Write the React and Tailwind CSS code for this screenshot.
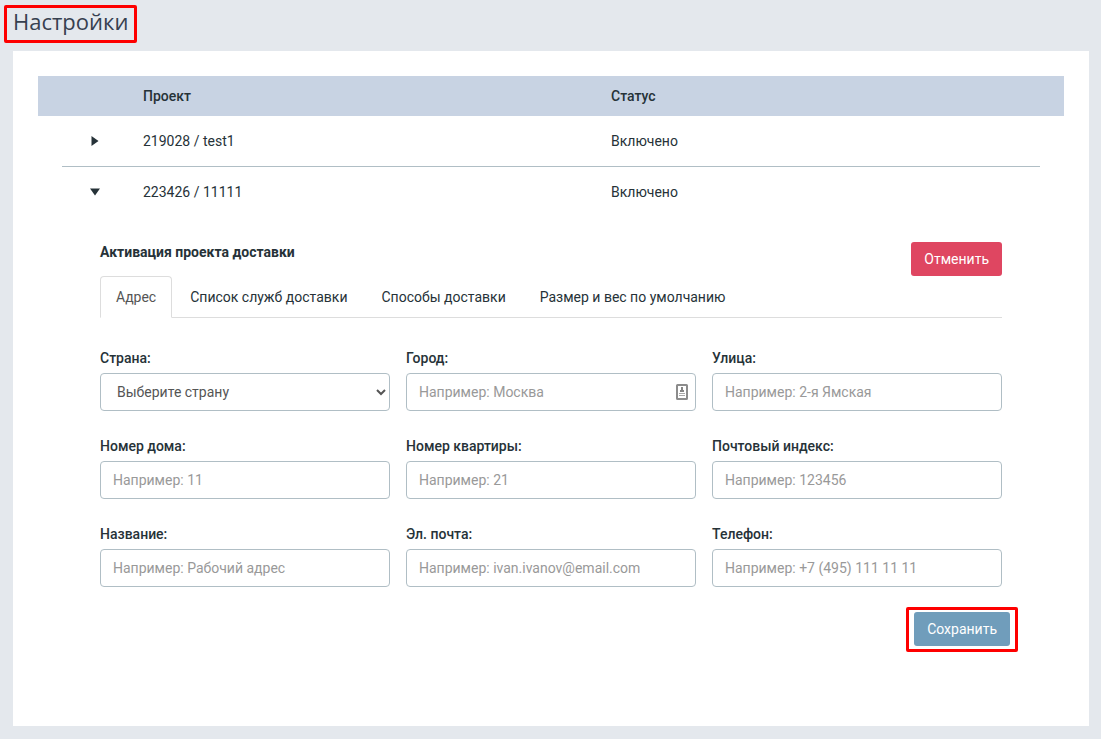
const tabs = ["Адрес", "Список служб доставки", "Способы доставки", "Размер и вес по умолчанию"];

const fields = [
  { id: "country", label: "Страна:", options: ["Выберите страну"] },
  { id: "city", label: "Город:", hint: "Например: Москва", autofill: true },
  { id: "street", label: "Улица:", hint: "Например: 2-я Ямская" },
  { id: "house", label: "Номер дома:", hint: "Например: 11" },
  { id: "flat", label: "Номер квартиры:", hint: "Например: 21" },
  { id: "zip", label: "Почтовый индекс:", hint: "Например: 123456" },
  { id: "name", label: "Название:", hint: "Например: Рабочий адрес" },
  { id: "email", label: "Эл. почта:", hint: "Например: ivan.ivanov@email.com", type: "email" },
  { id: "phone", label: "Телефон:", hint: "Например: +7 (495) 111 11 11", type: "tel" },
];

const controlClass =
  "block h-[38px] w-full rounded border border-[#b0bec5] bg-white px-3 text-[#555] placeholder:text-[#999] placeholder:opacity-100";

function AutofillIcon() {
  return (
    <svg className="pointer-events-none absolute top-[11px] right-2 h-4 w-3" viewBox="0 0 12 16" aria-hidden="true">
      <rect x="1" y="1" width="10" height="14" rx="0.5" fill="#fff" stroke="#8c8c8c" strokeWidth="2" />
      <path d="M5 3h2v3h1v2H4V6h1z" fill="#858585" />
      <path d="M3 9h6v1H3zM3 11h6v1H3z" fill="#a8a8a8" />
    </svg>
  );
}

function Field({ field }) {
  return (
    <div>
      <label htmlFor={field.id} className="mb-[5px] block font-medium text-[#263238]">
        {field.label}
      </label>
      <div className="relative">
        {field.options ? (
          <select id={field.id} className={controlClass}>
            {field.options.map((o) => (
              <option key={o}>{o}</option>
            ))}
          </select>
        ) : (
          <input id={field.id} type={field.type || "text"} placeholder={field.hint} className={controlClass} />
        )}
        {field.autofill && <AutofillIcon />}
      </div>
    </div>
  );
}

function ProjectRow({ name, status, open }) {
  return (
    <tr className="h-[50px]">
      <td className="pr-[15px] pl-6">
        <button type="button" aria-expanded={open} aria-label={name} className="mx-auto block">
          <svg className="h-3 w-3" viewBox="0 0 12 12" fill="#263238" aria-hidden="true">
            {open ? <path d="M1 2.5h10L6 9.5z" /> : <path d="M2.5 1v10L9.5 6z" />}
          </svg>
        </button>
      </td>
      <td>{name}</td>
      <td>{status}</td>
    </tr>
  );
}

function ProjectSettings() {
  return (
    <form className="px-[62px] pt-[25px]">
      <div className="flex items-start justify-between">
        <h2 className="font-bold">Активация проекта доставки</h2>
        <button type="button" className="h-[34px] rounded-[3px] bg-[#df4661] px-[13px] text-white">
          Отменить
        </button>
      </div>
      <div role="tablist" className="flex gap-0.5 border-b border-[#ddd]">
        {tabs.map((t, i) => (
          <button
            key={t}
            type="button"
            role="tab"
            aria-selected={i === 0}
            className={
              i === 0
                ? "-mb-px rounded-t border border-[#ddd] border-b-white bg-white px-[15px] py-2.5 text-[#555]"
                : "-mb-px border border-transparent px-[15px] py-2.5"
            }
          >
            {t}
          </button>
        ))}
      </div>
      <div className="mt-[30px] grid grid-cols-3 gap-x-4 gap-y-[25px]">
        {fields.map((f) => (
          <Field key={f.id} field={f} />
        ))}
      </div>
      <div className="-mr-2 mt-[25px] flex justify-end">
        <div className="relative">
          <button type="submit" className="block h-[34px] rounded-[3px] bg-[#709dbb] px-[13px] text-white">
            Сохранить
          </button>
          <span className="pointer-events-none absolute -inset-x-2 -top-[5px] -bottom-1.5 rounded-[2px] border-3 border-[#fe0000]" />
        </div>
      </div>
    </form>
  );
}

export default function App() {
  return (
    <div className="min-h-screen bg-[#e4e8ed] pr-3 pb-3 pl-[13px] font-['Roboto',sans-serif] text-sm leading-5 text-[#263238]">
      <header className="flex h-[51px] items-start pt-[5px]">
        <div className="relative">
          <h1 className="font-['Open_Sans',sans-serif] text-[22px] leading-8 text-[#37404f]">Настройки</h1>
          <span className="pointer-events-none absolute -inset-x-[9px] top-0 -bottom-1.5 rounded-[2px] border-3 border-[#fe0000]" />
        </div>
      </header>
      <main className="bg-white px-[25px] pt-[25px] pb-20">
        <table className="w-full table-fixed text-left">
          <colgroup>
            <col className="w-[105px]" />
            <col />
            <col className="w-[453px]" />
          </colgroup>
          <thead>
            <tr className="h-10 bg-[#c8d3e3]">
              <td></td>
              <th scope="col" className="font-medium">Проект</th>
              <th scope="col" className="font-medium">Статус</th>
            </tr>
          </thead>
          <tbody>
            <ProjectRow name="219028 / test1" status="Включено" open={false} />
            <tr>
              <td colSpan={3} className="px-6">
                <div className="h-px bg-[#b0bec5]" />
              </td>
            </tr>
            <ProjectRow name="223426 / 11111" status="Включено" open />
            <tr>
              <td colSpan={3}>
                <ProjectSettings />
              </td>
            </tr>
          </tbody>
        </table>
      </main>
    </div>
  );
}
